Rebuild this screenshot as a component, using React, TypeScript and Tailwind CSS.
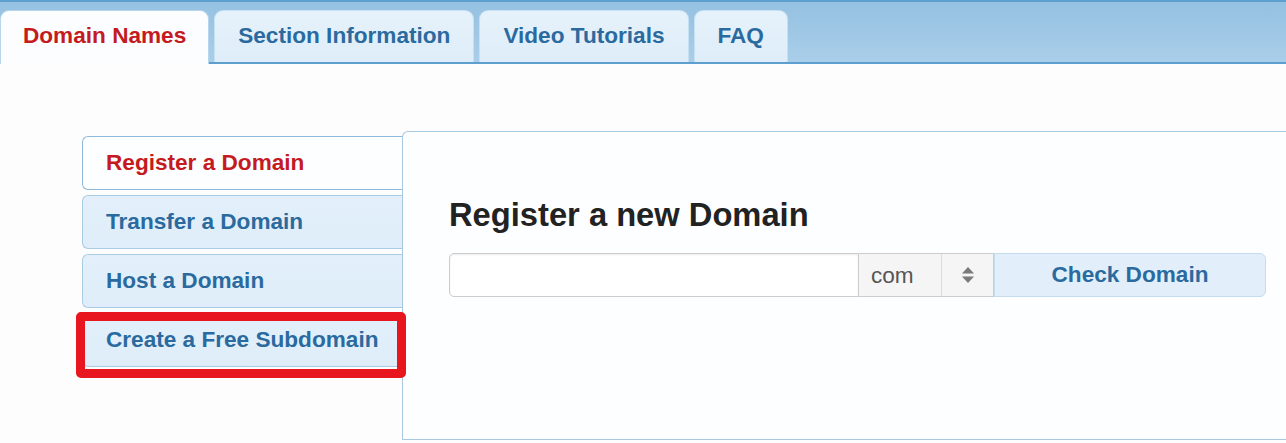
import React from 'react';

const topTabs = [
  { label: 'Domain Names', active: true },
  { label: 'Section Information', active: false },
  { label: 'Video Tutorials', active: false },
  { label: 'FAQ', active: false },
];

const sideTabs = [
  { label: 'Register a Domain', active: true },
  { label: 'Transfer a Domain', active: false },
  { label: 'Host a Domain', active: false },
  { label: 'Create a Free Subdomain', active: false, marked: true },
];

const App = () => {
  return (
    <div className="w-[1286px] h-[443px] overflow-hidden bg-[#fdfdfd] font-['Liberation_Sans',Arial,sans-serif]">
      {/* top tab bar */}
      <div className="flex items-end gap-[5px] h-[64px] border-y-2 border-[#5d9fcf] bg-gradient-to-b from-[#95c1e2] to-[#a9cee9]">
        {topTabs.map((tab) =>
          tab.active ? (
            <div
              key={tab.label}
              className="h-[54px] -mb-[2px] px-[22px] pb-[4px] flex items-center rounded-t-[9px] border border-b-0 border-[#b7d5ec] bg-[#fcfdfe] text-[22.6px] font-bold text-[#c41a20]"
            >
              {tab.label}
            </div>
          ) : (
            <div
              key={tab.label}
              className="h-[52px] px-[23px] pb-[2px] flex items-center rounded-t-[9px] border border-b-0 border-[#c6dff1] bg-gradient-to-b from-[#e6f2fb] to-[#deedf9] text-[22.6px] font-bold text-[#2b6a9e]"
            >
              {tab.label}
            </div>
          )
        )}
      </div>

      {/* content */}
      <div className="flex pt-[67px] pl-[82px]">
        <div className="w-[320px] mt-[5px] flex flex-col gap-[5px]">
          {sideTabs.map((tab) => (
            <div key={tab.label} className="relative">
              <div
                className={
                  tab.active
                    ? 'h-[54px] pl-[23px] flex items-center rounded-l-[6px] border border-r-0 border-[#8dbadc] bg-[#fdfeff] text-[22.6px] font-bold text-[#c41a20]'
                    : 'h-[54px] pl-[23px] flex items-center rounded-l-[6px] border border-r-0 border-[#a9cbe4] bg-gradient-to-b from-[#e3f0fb] to-[#deedf9] text-[22.6px] font-bold text-[#2b6a9e]'
                }
              >
                {tab.label}
              </div>
              {tab.marked && (
                <div className="absolute -left-[6px] -top-[1px] w-[330px] h-[66px] rounded-[5px] border-[9px] border-[#e8161f]" />
              )}
            </div>
          ))}
        </div>

        <div className="flex-1 h-[309px] rounded-tl-[6px] border border-r-0 border-[#a8c9df] bg-[#fdfeff] pl-[46px] pt-[67px]">
          <h1 className="text-[32.7px] leading-none font-bold text-[#222222]">Register a new Domain</h1>
          <div className="flex mt-[21px] h-[44px]">
            <input
              type="text"
              className="w-[410px] h-full rounded-l-[5px] border border-[#cccccc] bg-white shadow-[inset_0_1px_2px_rgba(0,0,0,0.08)] outline-none"
            />
            <div className="flex h-full border border-l-0 border-[#cccccc] bg-[#f5f5f5]">
              <div className="w-[83px] pl-[12px] pt-[3px] flex items-center text-[22.6px] text-[#555555] border-r border-[#dddddd]">
                com
              </div>
              <div className="w-[51px] flex items-center justify-center">
                <svg width="14" height="20" viewBox="0 0 14 20">
                  <path d="M7 2 L13 8.5 H1 Z" fill="#7a7a7a" />
                  <path d="M7 18 L13 11.5 H1 Z" fill="#7a7a7a" />
                </svg>
              </div>
            </div>
            <button className="w-[272px] h-full rounded-r-[6px] border border-[#c4dcee] bg-[#e2effa] text-[22.6px] font-bold text-[#2b6a9e]">
              Check Domain
            </button>
          </div>
        </div>
      </div>
    </div>
  );
};

export default App;
